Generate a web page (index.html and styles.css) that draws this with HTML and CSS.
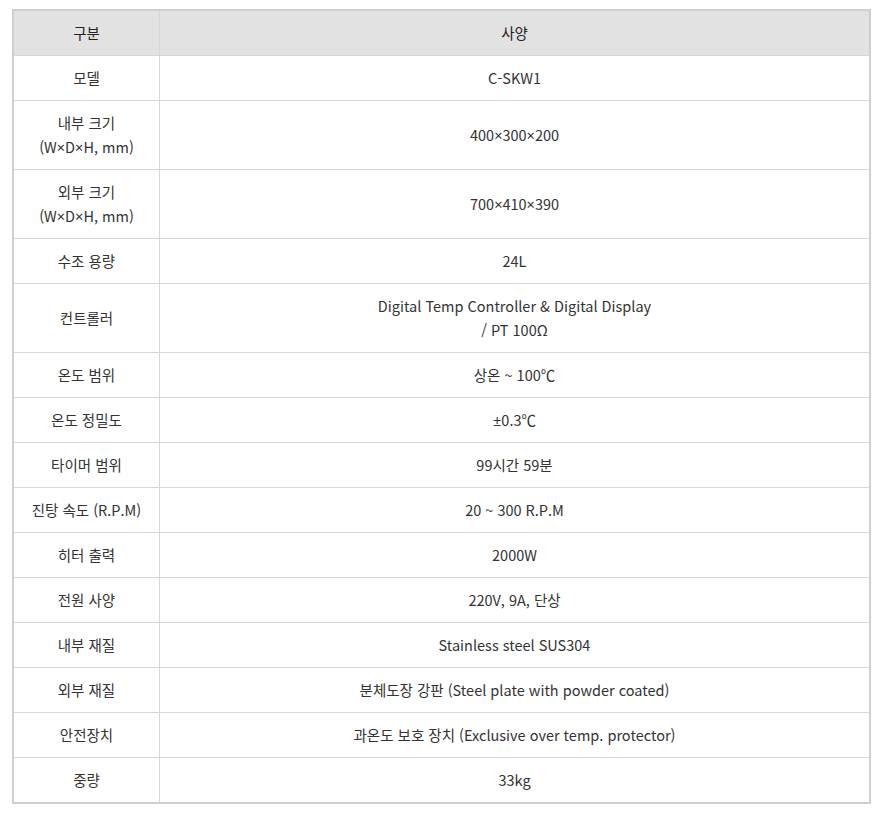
FILE: index.html
```html
<!DOCTYPE html>
<html lang="ko">
<head>
<meta charset="utf-8">
<title>사양</title>
<link rel="stylesheet" href="styles.css">
</head>
<body>
<table class="spec">
  <thead>
    <tr><th class="c1">구분</th><th>사양</th></tr>
  </thead>
  <tbody>
    <tr><td class="c1">모델</td><td>C-SKW1</td></tr>
    <tr><td class="c1">내부 크기<br>(W<span class="sym">×</span>D<span class="sym">×</span>H, mm)</td><td>400<span class="sym">×</span>300<span class="sym">×</span>200</td></tr>
    <tr><td class="c1">외부 크기<br>(W<span class="sym">×</span>D<span class="sym">×</span>H, mm)</td><td>700<span class="sym">×</span>410<span class="sym">×</span>390</td></tr>
    <tr><td class="c1">수조 용량</td><td>24L</td></tr>
    <tr><td class="c1">컨트롤러</td><td>Digital Temp Controller &amp; Digital Display<br>/ PT 100Ω</td></tr>
    <tr><td class="c1">온도 범위</td><td>상온 ~ 100℃</td></tr>
    <tr><td class="c1">온도 정밀도</td><td><span class="sym">±</span>0.3℃</td></tr>
    <tr><td class="c1">타이머 범위</td><td>99시간 59분</td></tr>
    <tr><td class="c1">진탕 속도 (R.P.M)</td><td>20 ~ 300 R.P.M</td></tr>
    <tr><td class="c1">히터 출력</td><td>2000W</td></tr>
    <tr><td class="c1">전원 사양</td><td>220V, 9A, 단상</td></tr>
    <tr><td class="c1">내부 재질</td><td>Stainless steel SUS304</td></tr>
    <tr><td class="c1">외부 재질</td><td>분체도장 강판 (Steel plate with powder coated)</td></tr>
    <tr><td class="c1">안전장치</td><td>과온도 보호 장치 (Exclusive over temp. protector)</td></tr>
    <tr><td class="c1">중량</td><td>33kg</td></tr>
  </tbody>
</table>
</body>
</html>
```

FILE: styles.css
```css
html, body {
  margin: 0;
  padding: 0;
  background: #ffffff;
}
body {
  padding: 9px 0 0 12px;
  font-family: "Noto Sans CJK KR", "Noto Sans", sans-serif;
  font-size: 14.5px;
  color: #333333;
}
.spec {
  width: 859px;
  border-collapse: collapse;
  border: 2px solid #cfcfcf;
}
.spec th,
.spec td {
  border: 1px solid #d6d6d6;
  padding: 10px 4px;
  line-height: 24px;
  text-align: center;
  font-weight: normal;
  vertical-align: middle;
}
.spec thead th {
  background: #e2e2e2;
  color: #222222;
}
.spec .c1 {
  width: 137px;
}
.sym {
  font-family: "Noto Sans", "DejaVu Sans", sans-serif;
}
```
